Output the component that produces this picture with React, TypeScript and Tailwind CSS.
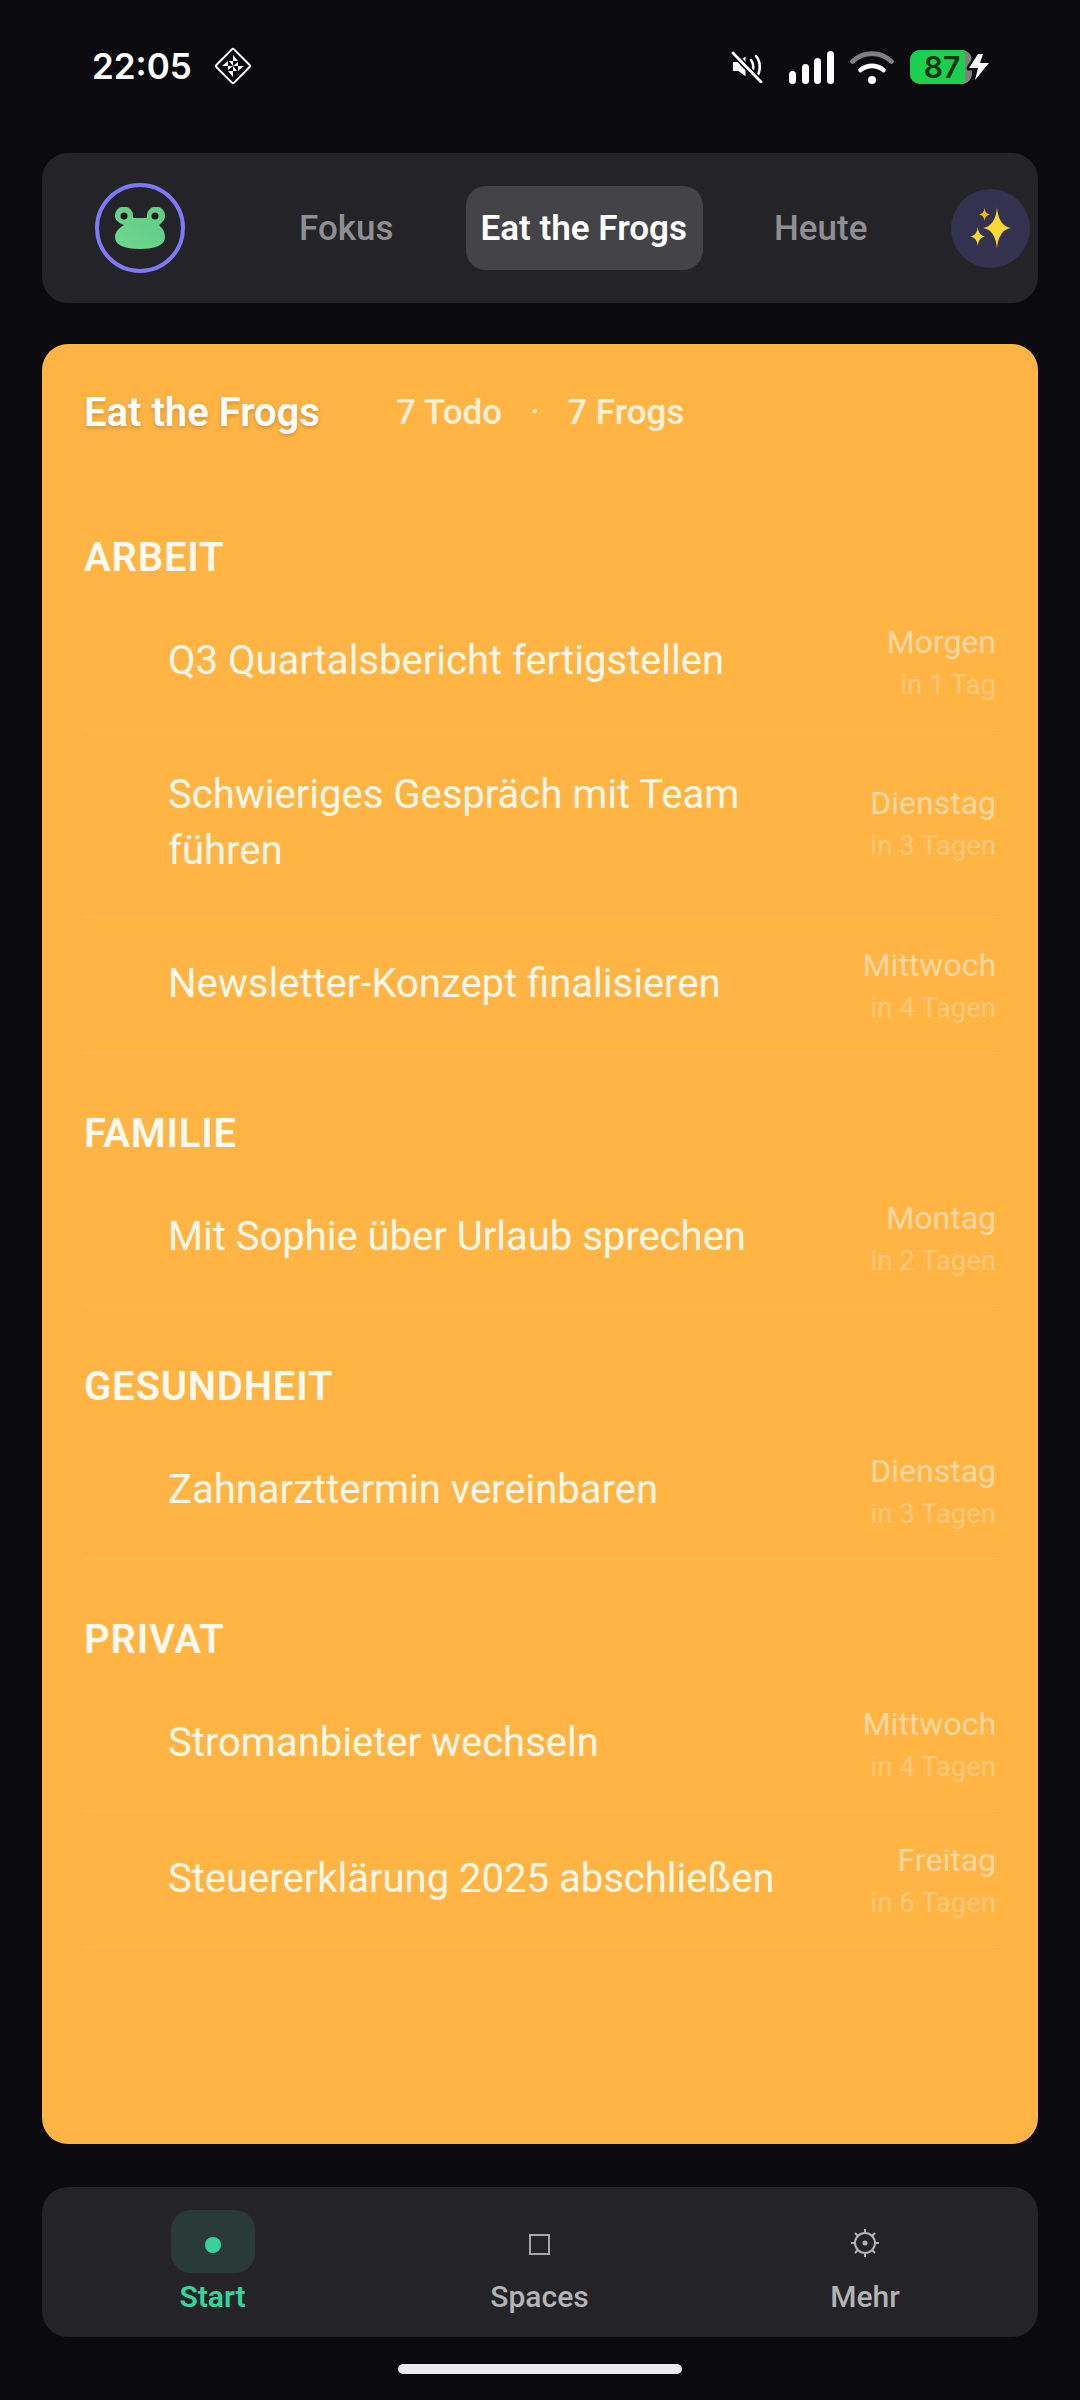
const font = { fontFamily: "Roboto, sans-serif" };

const groups = [
  {
    name: "ARBEIT",
    rows: [
      { title: "Q3 Quartalsbericht fertigstellen", day: "Morgen", rel: "in 1 Tag" },
      { title: "Schwieriges Gespräch mit Team führen", day: "Dienstag", rel: "in 3 Tagen" },
      { title: "Newsletter-Konzept finalisieren", day: "Mittwoch", rel: "in 4 Tagen" },
    ],
  },
  {
    name: "FAMILIE",
    rows: [{ title: "Mit Sophie über Urlaub sprechen", day: "Montag", rel: "in 2 Tagen" }],
  },
  {
    name: "GESUNDHEIT",
    rows: [{ title: "Zahnarzttermin vereinbaren", day: "Dienstag", rel: "in 3 Tagen" }],
  },
  {
    name: "PRIVAT",
    rows: [
      { title: "Stromanbieter wechseln", day: "Mittwoch", rel: "in 4 Tagen" },
      { title: "Steuererklärung 2025 abschließen", day: "Freitag", rel: "in 6 Tagen" },
    ],
  },
];

function DiamondIcon() {
  return (
    <svg width="38" height="38" viewBox="0 0 38 38" fill="none">
      <rect x="6.500" y="6.500" width="25" height="25" rx="1.5" transform="rotate(45 19 19)" stroke="white" strokeWidth="2" />
      <path d="M19 8l5 6h-5zM30 19l-6 5v-5zM19 30l-5-6h5zM8 19l6-5v5z" fill="white" />
      <path d="M19 19l-4-5h4zM19 19l5-4v4zM19 19l4 5h-4zM19 19l-5 4v-4z" fill="white" />
    </svg>
  );
}

function MuteIcon() {
  return (
    <svg width="32" height="32" viewBox="0 0 32 32" fill="none">
      <path d="M1 11h6l8-6v22l-8-6H1z" fill="white" transform="translate(1 1) scale(.9)" />
      <path d="M20 9c3 4 3 10 0 14M25 5c5 6 5 16 0 22" stroke="white" strokeWidth="2.6" strokeLinecap="round" />
      <path d="M2 2l28 29" stroke="#0a0a0f" strokeWidth="6" />
      <path d="M2 2l28 29" stroke="white" strokeWidth="2.8" strokeLinecap="round" />
    </svg>
  );
}

function SignalIcon() {
  return (
    <svg width="45" height="33" viewBox="0 0 45 33" fill="white">
      <rect x="0" y="20" width="7" height="13" rx="3.5" />
      <rect x="13" y="13" width="7" height="20" rx="3.5" />
      <rect x="25" y="7" width="7" height="26" rx="3.5" />
      <rect x="38" y="0" width="7" height="33" rx="3.5" />
    </svg>
  );
}

function WifiIcon() {
  return (
    <svg width="44" height="33" viewBox="0 0 44 33" fill="none" strokeLinecap="round">
      <path d="M2.500 10.500C14 0 30 0 41.500 10.500" stroke="#808080" strokeWidth="4.6" />
      <path d="M10.500 19c7-5.500 16-5.500 23 0" stroke="white" strokeWidth="4.6" />
      <circle cx="22" cy="29" r="4" fill="white" />
    </svg>
  );
}

function Battery() {
  return (
    <div className="flex items-center">
      <div className="h-[34px] w-[62px] overflow-hidden rounded-[10px] bg-[#808080]">
        <div className="flex h-full w-[55px] items-center justify-center bg-[#1ccf4d] pl-[9px] text-[30px] font-semibold text-[#0a3316]" style={{ fontFamily: "Inter, sans-serif" }}>
          87
        </div>
      </div>
      <svg className="-ml-[5px] overflow-visible" width="24" height="28" viewBox="0 0 24 28" fill="white">
        <path d="M11 1h5l-3 9h9L8 27l3-12H2z" stroke="#0a0a0f" strokeWidth="5" paintOrder="stroke" strokeLinejoin="round" />
      </svg>
    </div>
  );
}

function FrogAvatar() {
  return (
    <div className="flex h-[90px] w-[90px] shrink-0 items-center justify-center rounded-full border-[4px] border-[#8178f6]">
      <svg width="50" height="42" viewBox="0 0 50 42">
        <defs>
          <linearGradient id="frog" x1="0" y1="1" x2="1" y2="0">
            <stop offset="0" stopColor="#6fd88f" />
            <stop offset="1" stopColor="#5ecb84" />
          </linearGradient>
        </defs>
        <path d="M9 18C3 16 0 12 0 9a9 9 0 0 1 18-1c0 1 0 3 1 3h12c1 0 1-2 1-3a9 9 0 0 1 18 1c0 3-3 7-6 9 3 3 6 6 6 12 0 8-9 12-25 12S0 38 0 30c0-5 4-9 9-12z" fill="url(#frog)" />
        <circle cx="9" cy="9" r="3.500" fill="#17171b" />
        <circle cx="40" cy="9" r="3.500" fill="#17171b" />
      </svg>
    </div>
  );
}

function Sparkles() {
  const star = "M50 0C53 30 70 47 100 50 70 53 53 70 50 100 47 70 30 53 0 50 30 47 47 30 50 0z";
  return (
    <svg width="42" height="42" viewBox="0 0 42 42">
      <path d={star} fill="#fdd835" transform="translate(13 0) scale(.28 .42)" />
      <path d={star} fill="#fbb11c" transform="translate(9 1) scale(.11 .13)" />
      <path d={star} fill="#fdd835" transform="translate(0 20) scale(.155 .19)" />
    </svg>
  );
}

function Row({ title, day, rel }: { title: string; day: string; rel: string }) {
  return (
    <div className="flex min-h-[136px] items-center justify-between border-b border-white/15 pl-[84px]">
      <div className="max-w-[620px] py-[37px] text-[40px] leading-[56px] text-[#fff8ea]">{title}</div>
      <div className="shrink-0 pt-[1px] text-right">
        <div className="text-[32px] leading-[38px] text-white/50">{day}</div>
        <div className="mt-[8px] text-[27.5px] leading-[32px] text-white/30">{rel}</div>
      </div>
    </div>
  );
}

export default function App() {
  return (
    <div className="flex h-[2400px] w-[1080px] flex-col bg-[#0a0a0f] px-[42px]" style={font}>
      <div className="flex h-[153px] items-start justify-between pt-[47px] pl-[50px] pr-[47px]">
        <div className="flex items-center gap-[22px]">
          <span className="text-[35px] font-semibold leading-[38px] text-white" style={{ fontFamily: "Inter, sans-serif" }}>22:05</span>
          <DiamondIcon />
        </div>
        <div className="mt-[3px] flex items-center gap-[16px]">
          <MuteIcon />
          <div className="ml-[10px]"><SignalIcon /></div>
          <WifiIcon />
          <Battery />
        </div>
      </div>

      <div className="flex h-[150px] items-center rounded-[26px] bg-[#232328] pl-[53px] pr-[8px]">
        <FrogAvatar />
        <div className="ml-[100px] flex items-center gap-[58px] text-[35px] font-medium">
          <div className="px-[14px] pt-[2px] text-[#8f8f93]">Fokus</div>
          <div className="flex h-[84px] items-center rounded-[20px] bg-[#434348] pl-[15px] pr-[16px] pt-[2px] font-semibold text-white">Eat the Frogs</div>
          <div className="-ml-[1px] px-[14px] pt-[2px] text-[#8f8f93]">Heute</div>
        </div>
        <div className="ml-auto flex h-[79px] w-[79px] items-center justify-center rounded-full bg-[#353250]">
          <Sparkles />
        </div>
      </div>

      <div className="mt-[41px] h-[1800px] rounded-[26px] bg-[#ffb444] px-[42px] pt-[43px]">
        <div className="flex items-center text-white">
          <div className="text-[40px] font-semibold leading-[52px] [text-shadow:0_2px_4px_rgba(0,0,0,0.2)]">Eat the Frogs</div>
          <div className="ml-[76px] text-[35px] font-medium text-white/80">7 Todo</div>
          <div className="mx-[28px] text-[35px] text-white/80">·</div>
          <div className="text-[35px] font-medium text-white/80">7 Frogs</div>
        </div>
        <div className="mt-[98px]">
          {groups.map((g, i) => (
            <div key={g.name} className={i > 0 ? "mt-[61px]" : ""}>
              <div className="mb-[16px] text-[40px] font-semibold leading-[40px] tracking-[0.8px] text-[#fffaf0]">{g.name}</div>
              {g.rows.map((r) => (
                <Row key={r.title} {...r} />
              ))}
            </div>
          ))}
        </div>
      </div>

      <div className="mt-[43px] flex h-[150px] rounded-[26px] bg-[#232328]">
        <div className="flex w-[341px] flex-col items-center pt-[23px]">
          <div className="flex h-[63px] w-[84px] items-center justify-center rounded-[20px] bg-[#2a3a38] pt-[6px]">
            <div className="h-[16px] w-[16px] rounded-full bg-[#34d399]" />
          </div>
          <div className="mt-[6px] text-[30px] font-semibold leading-[36px] text-[#34d399]">Start</div>
        </div>
        <div className="flex w-[313px] flex-col items-center pt-[23px]">
          <div className="flex h-[63px] items-center justify-center pt-[6px]">
            <div className="h-[21px] w-[21px] border-[2px] border-[#a8a8aa]" />
          </div>
          <div className="mt-[6px] text-[30px] font-medium leading-[36px] text-[#b4b4b6]">Spaces</div>
        </div>
        <div className="flex w-[338px] flex-col items-center pt-[23px]">
          <div className="flex h-[63px] items-center justify-center pt-[3px]">
            <svg width="30" height="30" viewBox="0 0 30 30" fill="none" stroke="#b4b4b6">
              <circle cx="15" cy="15" r="10" strokeWidth="2" />
              <circle cx="15" cy="15" r="2.500" fill="#b4b4b6" stroke="none" />
              <path d="M15 1v4M15 25v4M1 15h4M25 15h4M5 5l3 3M22 22l3 3M5 25l3-3M22 8l3-3" strokeWidth="2" />
            </svg>
          </div>
          <div className="mt-[6px] text-[30px] font-medium leading-[36px] text-[#b4b4b6]">Mehr</div>
        </div>
      </div>

      <div className="mx-auto mt-[27px] h-[10px] w-[284px] rounded-full bg-[#ececec]" />
    </div>
  );
}
